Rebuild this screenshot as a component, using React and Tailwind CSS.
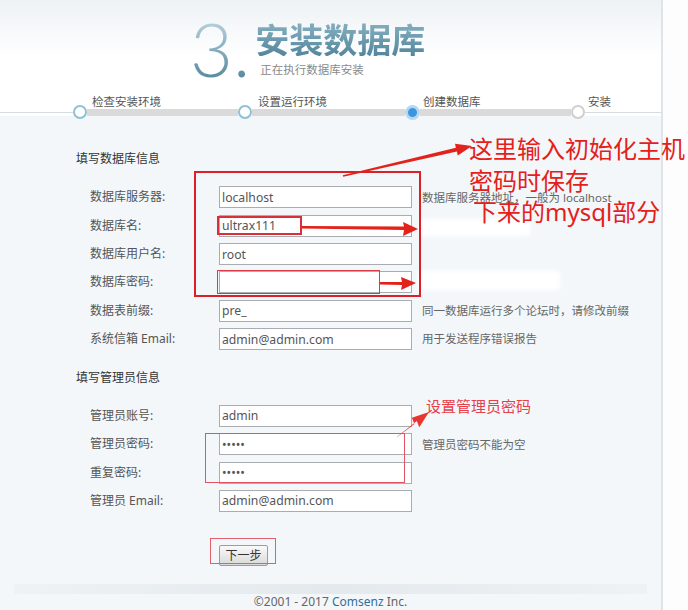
// Discuz! 安装向导 - 第3步 安装数据库（带红色标注）
import React from 'react';

const dbRows = [
  { label: '数据库服务器:', value: 'localhost', note: '数据库服务器地址，一般为 localhost' },
  { label: '数据库名:', value: 'ultrax111' },
  { label: '数据库用户名:', value: 'root' },
  { label: '数据库密码:', value: '', type: 'password' },
  { label: '数据表前缀:', value: 'pre_', note: '同一数据库运行多个论坛时，请修改前缀' },
  { label: '系统信箱 Email:', value: 'admin@admin.com', note: '用于发送程序错误报告' },
];

const adminRows = [
  { label: '管理员账号:', value: 'admin' },
  { label: '管理员密码:', value: 'admin', type: 'password', note: '管理员密码不能为空' },
  { label: '重复密码:', value: 'admin', type: 'password' },
  { label: '管理员 Email:', value: 'admin@admin.com' },
];

const FormRow = ({ label, value, note, type }) => (
  <div className="flex items-center h-[28.33px]">
    <span className="w-[143px] pl-[14px] text-[12px] text-[#555]">{label}</span>
    <input
      type={type || 'text'}
      defaultValue={value}
      readOnly
      className="w-[193px] h-[22px] px-[2px] border border-[#a9acb0] bg-white text-[12.2px] text-[#555] outline-none"
    />
    {note && <span className="ml-[10px] text-[11.5px] text-[#666] whitespace-nowrap">{note}</span>}
  </div>
);

const Dot = ({ state }) => {
  if (state === 'active') {
    return <div className="relative z-10 w-[15px] h-[15px] rounded-full border-[3px] border-[#b5d8ef] bg-[#3f95dc] shrink-0" />;
  }
  if (state === 'todo') {
    return <div className="relative z-10 w-[14px] h-[14px] rounded-full border-2 border-[#cfcfcf] bg-white shrink-0" />;
  }
  return <div className="relative z-10 w-[14px] h-[14px] rounded-full border-2 border-[#8ec0d6] bg-white shrink-0" />;
};

export default function App() {
  return (
    <div className="relative w-[688px] h-[610px] overflow-hidden bg-[#fdfdfd] font-['Noto_Sans','Noto_Sans_CJK_SC',sans-serif]">
      <div className="flex h-full">
        {/* main panel */}
        <div className="w-[663px] h-full flex flex-col border-r-2 border-[#dfe4e8]">
          {/* header */}
          <div className="h-[116px] flex flex-col bg-gradient-to-b from-[#eef2f5] via-white to-white shrink-0">
            <div className="flex items-start pl-[190px] pt-[12px] h-[96px]">
              <span className="font-['Lato',sans-serif] font-light text-[74px] leading-none bg-gradient-to-b from-[#c4dde6] to-[#4d8198] bg-clip-text text-transparent">
                3.
              </span>
              <div className="flex flex-col ml-[5px] mt-[10px]">
                <span className="text-[34px] leading-[34px] font-bold font-['Noto_Sans_CJK_SC',sans-serif] bg-gradient-to-b from-[#86b0c1] to-[#53879d] bg-clip-text text-transparent">
                  安装数据库
                </span>
                <span className="mt-[7px] ml-[5px] text-[11.5px] leading-[14px] text-[#8a8a8a]">正在执行数据库安装</span>
              </div>
            </div>
            {/* step labels */}
            <div className="flex pl-[92px] h-[12px] text-[11.5px] leading-[12px] text-[#555]">
              <span className="w-[166px]">检查安装环境</span>
              <span className="w-[165px]">设置运行环境</span>
              <span className="w-[165px]">创建数据库</span>
              <span>安装</span>
            </div>
            {/* step track */}
            <div className="flex items-center h-[8px]">
              <div className="w-[73px] h-px bg-[#d6dde2]" />
              <Dot />
              <div className="w-[151px] h-[7px] bg-[#dadada]" />
              <Dot />
              <div className="w-[153px] h-[7px] bg-[#dadada]" />
              <Dot state="active" />
              <div className="w-[151px] h-[7px] bg-[#dadada]" />
              <Dot state="todo" />
              <div className="flex-1 h-px bg-[#d6dde2]" />
            </div>
          </div>

          {/* body */}
          <div className="flex-1 flex flex-col bg-[#f3f7fa]">
            <div className="pl-[76px] pt-[35px]">
              <div className="text-[12px] leading-[16px] text-[#333]">填写数据库信息</div>
              <div className="mt-[16.3px] flex flex-col">
                {dbRows.map((r) => (
                  <FormRow key={r.label} {...r} />
                ))}
              </div>
              <div className="mt-[16.7px] text-[12px] leading-[16px] text-[#333]">填写管理员信息</div>
              <div className="mt-[15.8px] flex flex-col">
                {adminRows.map((r) => (
                  <FormRow key={r.label} {...r} />
                ))}
              </div>
              <div className="mt-[27px] pl-[143px]">
                <button className="w-[49px] h-[21px] rounded-[2px] border border-[#9c9c9c] bg-gradient-to-b from-[#fafafa] to-[#d9d9d9] text-[12px] leading-[19px] text-[#333]">
                  下一步
                </button>
              </div>
            </div>
            {/* footer */}
            <div className="mt-[18px] mx-[14px] h-[10px] bg-gradient-to-r from-[#eef2f5] via-[#e4e9ed] to-[#eef2f5]" />
            <div className="text-center text-[12px] leading-[16px] text-[#666]">
              ©2001 - 2017 <span className="text-[#2f6f9f]">Comsenz</span> Inc.
            </div>
          </div>
        </div>
        <div className="flex-1" />
      </div>

      {/* blanked-out notes */}
      <div className="absolute left-[420px] top-[219px] w-[110px] h-[17px] bg-white blur-[2px]" />
      <div className="absolute left-[418px] top-[271px] w-[142px] h-[19px] bg-white blur-[2px]" />

      {/* red annotations */}
      <div className="absolute left-[194px] top-[171px] w-[227px] h-[126px] border-2 border-[#dc2027]" />
      <div className="absolute left-[217px] top-[216px] w-[85px] h-[19px] border-2 border-[#d8303a]" />
      <div className="absolute left-[217px] top-[270px] w-[163px] h-[24px] border-[1.5px] border-[#d83c48]" />
      <div className="absolute left-[205px] top-[433px] w-[200px] h-[50px] border-[1.5px] border-[#e05563]" />
      <div className="absolute left-[210px] top-[538px] w-[66px] h-[26px] border-[1.5px] border-[#e0606c]" />

      <svg className="absolute inset-0 pointer-events-none" width="688" height="610" viewBox="0 0 688 610">
        {/* big arrow to the note */}
        <polygon
          points="343.2,176.8 456.9,151.5 457.8,155.4 472,146 455,143.8 455.9,147.7 342.8,175.2"
          fill="#e3221c"
        />
        {/* database name arrow */}
        <polygon points="302,226 404,226.5 403,222 418,229 403,236 404,230 302,228.5" fill="#e3221c" />
        {/* database password arrow */}
        <polygon points="380,282 402,282 401,277 416,283 401,290 402,285 380,284.5" fill="#e3221c" />
        {/* admin password arrow */}
        <polygon
          points="396.6,437.5 414.4,424 411.9,417.8 429,412 419.3,427.2 416.8,421 397.4,436.5"
          fill="#e8352f"
        />
      </svg>

      <div className="absolute left-[469px] top-[133px] text-[24px] leading-[31.5px] text-[#e5201b] whitespace-nowrap font-['Noto_Sans','Noto_Sans_CJK_SC',sans-serif]">
        <div>这里输入初始化主机</div>
        <div>密码时保存</div>
        <div className="pl-[4px]">下来的mysql部分</div>
      </div>
      <div className="absolute left-[426px] top-[396px] text-[15px] leading-[20px] text-[#e6404a] whitespace-nowrap">
        设置管理员密码
      </div>
    </div>
  );
}
